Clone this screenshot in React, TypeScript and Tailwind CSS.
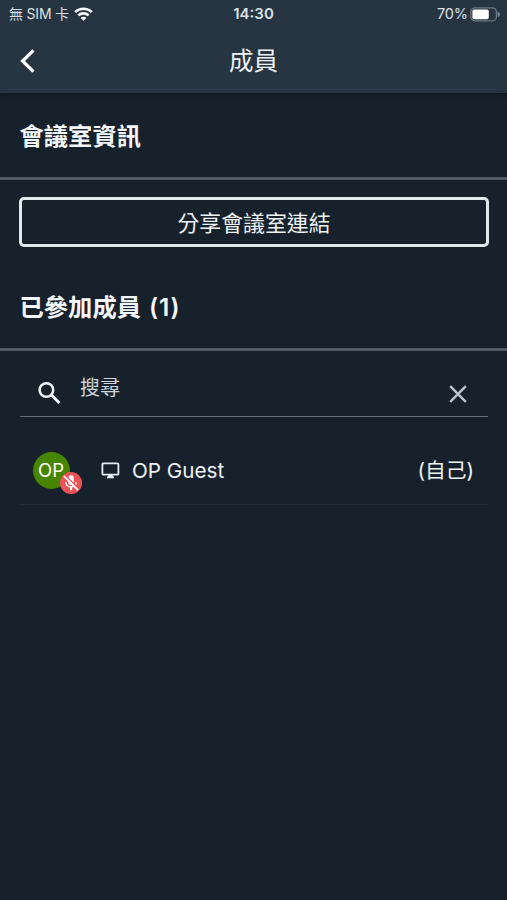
import React from "react";

const BackIcon = () => (
  <svg className="block h-[26px] w-4" viewBox="0 0 16 26" fill="none">
    <path d="M13.4 2.3 L2.6 13 L13.4 23.7" stroke="#fff" strokeWidth="3.3" />
  </svg>
);

const WifiIcon = () => (
  <svg className="block h-[14px] w-[19px]" viewBox="0 0 19 14" fill="none" stroke="#f4f7f9" strokeWidth="2.7">
    <path d="M1.2 5.1 C5.8 0.6 13.2 0.6 17.8 5.1" />
    <path d="M4.3 8.4 C7.2 5.6 11.8 5.6 14.7 8.4" />
    <path d="M9.5 13.8 L6.6 10.9 C8.2 9.5 10.8 9.5 12.4 10.9 Z" fill="#f4f7f9" stroke="none" />
  </svg>
);

const BatteryIcon = () => (
  <svg className="block h-[15px] w-[31px]" viewBox="0 0 31 15" fill="none">
    <rect x="0.8" y="0.8" width="25.6" height="13" rx="4" stroke="#6d7880" strokeWidth="1.3" />
    <rect x="2.4" y="2.4" width="16.4" height="9.8" rx="2" fill="#fff" />
    <path d="M27.6 4.4 C30.8 5.6 30.8 9 27.6 10.2 Z" fill="#78838b" />
  </svg>
);

const SearchIcon = () => (
  <svg className="block h-6 w-6" viewBox="0 0 24 24" fill="none" stroke="#f0f5f8" strokeWidth="2.5">
    <circle cx="9.4" cy="9" r="6.8" />
    <path d="M14.2 13.8 L22.4 22" strokeWidth="3" />
  </svg>
);

const CloseIcon = () => (
  <svg className="block h-[18px] w-[18px]" viewBox="0 0 18 18" fill="none">
    <path d="M1.2 1.2 L16.8 16.8 M16.8 1.2 L1.2 16.8" stroke="#bac4cc" strokeWidth="2.5" />
  </svg>
);

const MonitorIcon = () => (
  <svg className="block h-[17px] w-[19px]" viewBox="0 0 19 17" fill="none">
    <rect x="1.4" y="1.3" width="16" height="11.4" rx="1" stroke="#e4edf2" strokeWidth="1.8" />
    <path d="M7.3 12 H11.7 V13.8 L13 15.1 V16.2 H6 V15.1 L7.3 13.8 Z" fill="#e4edf2" />
  </svg>
);

const MicOffIcon = () => (
  <svg className="block h-[22px] w-[22px]" viewBox="0 0 22 22" fill="none">
    <rect x="8.5" y="3.2" width="5.2" height="9.8" rx="2.6" fill="#fff" />
    <path d="M6 10.2 C6 16.4 16.1 16.4 16.1 10.2" stroke="#fff" strokeWidth="1.4" />
    <path d="M11.1 14.8 V18.2" stroke="#fff" strokeWidth="2" />
    <path d="M5.4 3.4 L18.8 16.8" stroke="#ee5358" strokeWidth="1.4" />
    <path d="M4 4.2 L18 18.2" stroke="#fff" strokeWidth="1.7" />
  </svg>
);

const SectionTitle = ({ children }: { children: React.ReactNode }) => (
  <h2 className="flex h-[84px] items-center px-[19.5px] pt-px text-[24.3px] leading-9 font-bold text-[#f4f7f9]">{children}</h2>
);

export default function App() {
  return (
    <div className="flex h-[900px] w-[507px] flex-col overflow-hidden bg-[#17212c] font-['Inter','Noto_Sans_CJK_TC',sans-serif] text-[#edf2f5]">
      <header className="flex h-[93px] shrink-0 flex-col bg-[#273441] shadow-[0_1px_5px_#0b151d]">
        <div className="grid h-7 grid-cols-3 items-center pl-[9px] text-[14.5px] leading-5 text-[#d9e0e5]">
          <div className="flex items-center">
            <span className="w-[60px] text-[14px] tracking-[-0.2px] whitespace-nowrap">無 SIM 卡</span>
            <span className="ml-[5px]"><WifiIcon /></span>
          </div>
          <span className="-ml-[9px] text-center text-[15px] font-semibold">14:30</span>
          <div className="flex items-center justify-end pr-[6px]">
            <span className="mr-[2px] tracking-[-0.1px]">70%</span>
            <BatteryIcon />
          </div>
        </div>
        <div className="grid h-[65px] grid-cols-[40px_1fr_40px] items-center">
          <button className="pl-5" aria-label="返回"><BackIcon /></button>
          <h1 className="text-center text-[24.5px] leading-9">成員</h1>
        </div>
      </header>
      <main>
        <SectionTitle>會議室資訊</SectionTitle>
        <div className="h-[3px] border-y border-[#46525d] bg-[#5c6770]" />
        <div className="pt-[17px] pr-[18px] pl-[19px]">
          <button className="block h-[50px] w-full rounded-[5px] border-3 border-[#dfe8ea] pt-px text-[21.9px] leading-8">分享會議室連結</button>
        </div>
        <div className="pt-[17px]">
          <SectionTitle>已參加成員<span className="ml-[8px] font-semibold tracking-[0.9px]">(1)</span></SectionTitle>
        </div>
        <div className="h-[3px] border-y border-[#46525d] bg-[#5c6770]" />
        <div className="mr-[19px] ml-5 flex h-[66px] border-b-[1.5px] border-[#65727d]">
          <span className="pt-[30px] pl-[17px]"><SearchIcon /></span>
          <span className="pt-[21px] pl-[19px] text-[20px] leading-8 text-[#cdd6dd]">搜尋</span>
          <button className="mr-[21px] ml-auto self-start pt-[34px]" aria-label="清除"><CloseIcon /></button>
        </div>
        <div className="mr-[19px] ml-5 flex h-[88px] items-center border-b border-[#222d38] pt-[19px]">
          <div className="relative ml-[12.5px] flex h-[37px] w-[37px] items-center justify-center rounded-full bg-[#478500] text-[18.5px] leading-none text-white">
            OP
            <span className="absolute top-[20.5px] left-[27px] rounded-full bg-[#ee5358]"><MicOffIcon /></span>
          </div>
          <span className="ml-[31.5px]"><MonitorIcon /></span>
          <span className="ml-3 pt-0.5 text-[20.7px] leading-8">OP Guest</span>
          <span className="mr-[14px] ml-auto pt-0.5 text-[20.7px] leading-8">(自己)</span>
        </div>
      </main>
    </div>
  );
}
